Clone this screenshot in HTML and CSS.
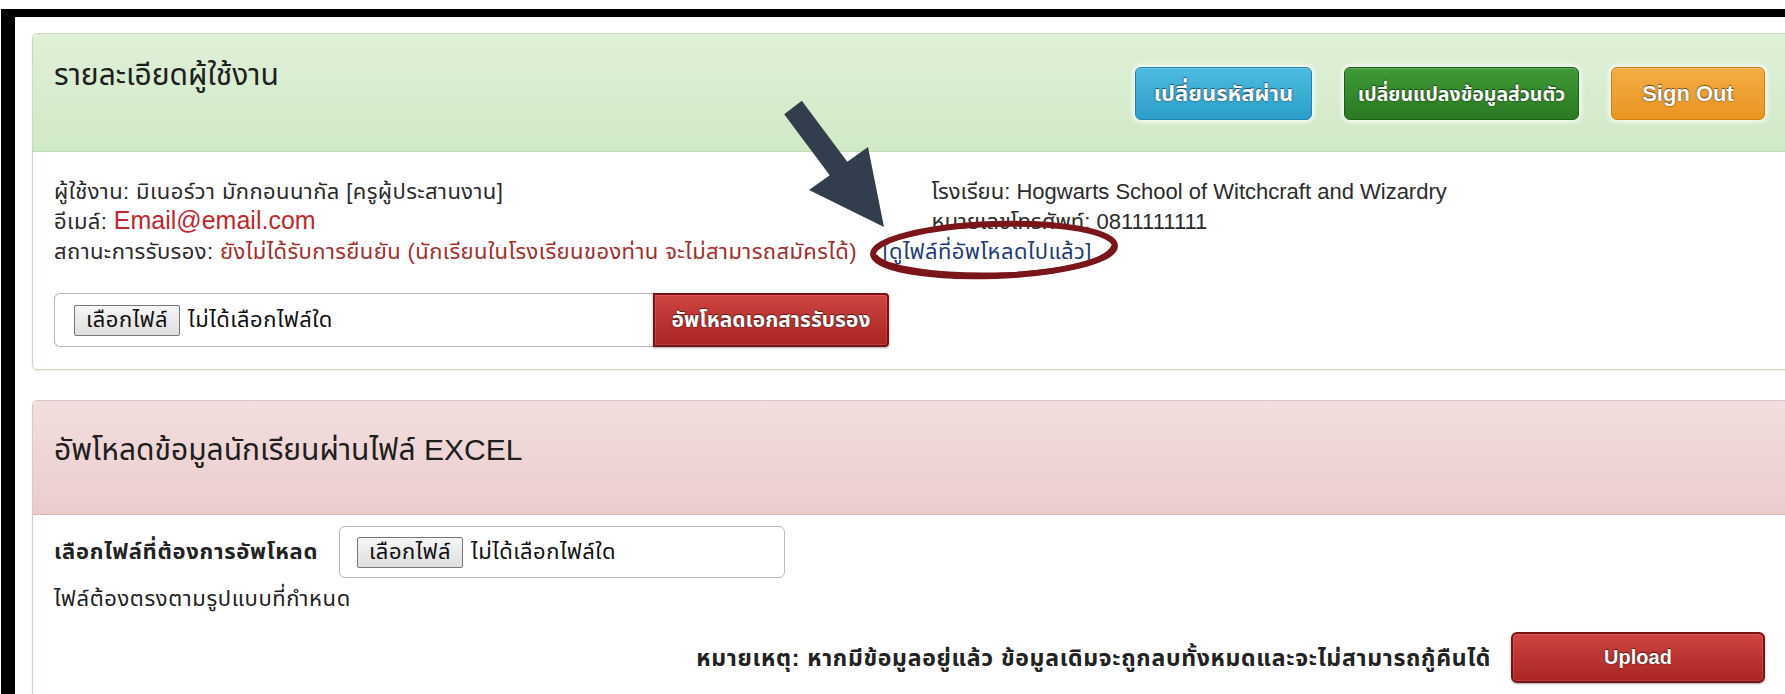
FILE: index.html
```html
<!DOCTYPE html>
<html lang="th">
<head>
<meta charset="utf-8">
<title>รายละเอียดผู้ใช้งาน</title>
<link rel="stylesheet" href="styles.css">
</head>
<body>
<div class="frame">
  <section class="panel panel-success">
    <header class="panel-heading">
      <h3 class="panel-title">รายละเอียดผู้ใช้งาน</h3>
      <div class="actions">
        <a class="btn btn-info btn-password">เปลี่ยนรหัสผ่าน</a>
        <a class="btn btn-success btn-profile">เปลี่ยนแปลงข้อมูลส่วนตัว</a>
        <a class="btn btn-warning btn-signout">Sign Out</a>
      </div>
    </header>
    <div class="panel-body">
      <div class="info-grid">
        <div class="info-col">
          <div>ผู้ใช้งาน: มิเนอร์วา มักกอนนากัล [ครูผู้ประสานงาน]</div>
          <div>อีเมล์: <span class="email">Email@email.com</span></div>
        </div>
        <div class="info-col school">
          <div>โรงเรียน: Hogwarts School of Witchcraft and Wizardry</div>
          <div>หมายเลขโทรศัพท์: 0811111111</div>
        </div>
      </div>
      <div class="status">สถานะการรับรอง: <span class="text-danger">ยังไม่ได้รับการยืนยัน (นักเรียนในโรงเรียนของท่าน จะไม่สามารถสมัครได้)</span> <a class="file-link">[ดูไฟล์ที่อัพโหลดไปแล้ว]</a></div>
      <div class="upload-group">
        <label class="file-field joined">
          <span class="file-btn">เลือกไฟล์</span>
          <span class="file-name">ไม่ได้เลือกไฟล์ใด</span>
        </label>
        <button class="btn btn-danger btn-cert">อัพโหลดเอกสารรับรอง</button>
      </div>
    </div>
  </section>

  <section class="panel panel-danger">
    <header class="panel-heading">
      <h3 class="panel-title">อัพโหลดข้อมูลนักเรียนผ่านไฟล์ EXCEL</h3>
    </header>
    <div class="panel-body excel-body">
      <div class="pick-row">
        <span class="pick-label">เลือกไฟล์ที่ต้องการอัพโหลด</span>
        <label class="file-field single">
          <span class="file-btn">เลือกไฟล์</span>
          <span class="file-name">ไม่ได้เลือกไฟล์ใด</span>
        </label>
      </div>
      <div class="hint">ไฟล์ต้องตรงตามรูปแบบที่กำหนด</div>
      <div class="submit-row">
        <span class="remark">หมายเหตุ: หากมีข้อมูลอยู่แล้ว ข้อมูลเดิมจะถูกลบทั้งหมดและจะไม่สามารถกู้คืนได้</span>
        <button class="btn btn-danger btn-upload">Upload</button>
      </div>
    </div>
  </section>
</div>

<svg class="annotation" width="1785" height="694" viewBox="0 0 1785 694">
  <polygon class="arrow" points="801.8,100.8 847.3,161.8 868,147 884,227 809,190 829.7,175.2 784.2,114.2"/>
  <ellipse class="ring" cx="994" cy="250" rx="121" ry="26" transform="rotate(-2 994 250)"/>
  <path class="ring-thick" d="M875 256 C 893 282, 1097 284, 1114 246"/>
</svg>
</body>
</html>
```

FILE: styles.css
```css
* { box-sizing: border-box; }

html, body {
  margin: 0;
  background: #fff;
  overflow: hidden;
}

body {
  position: relative;
  width: 1785px;
  height: 694px;
  font-family: "Liberation Sans", "Noto Sans Thai", "Noto Sans Thai UI", Loma, Garuda, Tahoma, sans-serif;
  font-size: 22px;
  line-height: 30px;
  letter-spacing: 0.4px;
  color: #2b2b2b;
}

/* black rim around the page */
.frame {
  margin: 9px 0 0 1px;
  border-top: 8px solid #000;
  border-left: 14px solid #000;
  padding: 16px 0 0 17px;
}

.panel {
  width: 1760px;
  border: 1px solid #ccc;
  border-radius: 5px;
  background: #fff;
  box-shadow: 0 1px 2px rgba(0, 0, 0, .08);
  margin-bottom: 30px;
}

.panel-heading {
  border-bottom: 1px solid #c6d9b8;
  border-radius: 5px 5px 0 0;
  padding: 0 26px 0 21px;
}

.panel-title {
  margin: 0;
  font-size: 30px;
  line-height: 30px;
  letter-spacing: 0;
  font-weight: normal;
  color: #1e1e1e;
}

/* green user panel */
.panel-success { border-color: #c9d9bf; }
.panel-success .panel-heading {
  display: flex;
  justify-content: space-between;
  align-items: flex-start;
  height: 118px;
  padding-top: 26px;
  background: linear-gradient(#dff0d8, #d0e9c6);
}

.actions {
  display: flex;
  gap: 32px;
  margin-top: 7px;
}

/* red excel panel */
.panel-danger { border-color: #e0c4c7; height: 300px; }
.panel-danger .panel-heading {
  height: 114px;
  padding-top: 34px;
  background: linear-gradient(#f2dede, #ebcccc);
  border-bottom-color: #dcb8bc;
}

.panel-body {
  padding: 25px 26px 22px 21px;
}

/* buttons */
.btn {
  display: inline-flex;
  align-items: center;
  justify-content: center;
  height: 53px;
  padding: 0 8px;
  border-radius: 6px;
  font-family: inherit;
  font-size: 20px;
  font-weight: bold;
  letter-spacing: 0;
  color: #fff;
  text-shadow: 0 0 2px rgba(0, 0, 0, .7), 0 -1px 0 rgba(0, 0, 0, .4);
  white-space: nowrap;
  cursor: pointer;
  box-shadow: 0 0 5px 2px rgba(255, 255, 255, .85), inset 0 1px 0 rgba(255, 255, 255, .2);
}

.btn-info {
  background: linear-gradient(#4cbbe0, #2a9fcb);
  border: 1px solid #1f82ad;
}
.btn-success {
  background: linear-gradient(#3f9a36, #2a7a22);
  border: 1px solid #1d5e17;
}
.btn-warning {
  background: linear-gradient(#f3ad45, #ea9520);
  border: 1px solid #d08012;
}
.btn-danger {
  background: linear-gradient(#cf4541, #a92422);
  border: 2px solid #7a1212;
  box-shadow: inset 0 0 0 1px rgba(255, 255, 255, .12), 0 1px 2px rgba(0, 0, 0, .35);
}

.btn-password { width: 177px; font-size: 22px; }
.btn-profile { width: 235px; font-size: 19.5px; }
.btn-signout { width: 154px; font-size: 22px; }

/* user info */
.info-grid {
  display: grid;
  grid-template-columns: 1fr 1fr;
  column-gap: 44px;
}

.school { letter-spacing: 0; }

.email {
  font-size: 25px;
  line-height: 20px;
  letter-spacing: 0;
  color: #c1272d;
}

.text-danger { color: #a52d2c; }

.file-link {
  color: #1f3c78;
  margin-left: 19px;
}

/* file picker look */
.file-field {
  display: flex;
  align-items: center;
  background: #fff;
  border: 1px solid #bbb;
  font-size: 22px;
  letter-spacing: 0.5px;
}

.file-btn {
  display: inline-flex;
  align-items: center;
  height: 31px;
  padding: 0 11px;
  border: 1px solid #777;
  border-radius: 2px;
  background: linear-gradient(#f6f6f6, #dedede);
  color: #111;
}

.file-name {
  margin-left: 8px;
  color: #111;
}

.upload-group {
  display: flex;
  width: 835px;
  height: 54px;
  margin-top: 26px;
}

.file-field.joined {
  flex: 1;
  border-right: none;
  border-radius: 6px 0 0 6px;
  padding-left: 19px;
}

.btn-cert {
  width: 236px;
  height: 54px;
  font-size: 21px;
  border-radius: 0 4px 4px 0;
}

/* excel upload body */
.excel-body { padding-top: 11px; }

.pick-row {
  display: flex;
  align-items: center;
  gap: 21px;
}

.pick-label {
  font-weight: bold;
  font-size: 22px;
  letter-spacing: 0.7px;
  color: #222;
}

.file-field.single {
  width: 446px;
  height: 52px;
  border-radius: 6px;
  padding-left: 17px;
}

.hint {
  margin-top: 6px;
  font-size: 22px;
  letter-spacing: 0.6px;
  color: #222;
}

.submit-row {
  display: flex;
  justify-content: flex-end;
  align-items: center;
  gap: 20px;
  margin-top: 18px;
}

.remark {
  font-weight: bold;
  font-size: 23px;
  letter-spacing: 0.7px;
  color: #222;
}

.btn-upload {
  width: 254px;
  height: 51px;
  font-size: 20px;
}

/* pointer arrow and ring drawn over the page */
.annotation {
  position: absolute;
  left: 0;
  top: 0;
  pointer-events: none;
}

.arrow { fill: #323d4e; }

.ring {
  fill: none;
  stroke: #7a1519;
  stroke-width: 6;
}

.ring-thick {
  fill: none;
  stroke: #7a1519;
  stroke-width: 5;
}
```
